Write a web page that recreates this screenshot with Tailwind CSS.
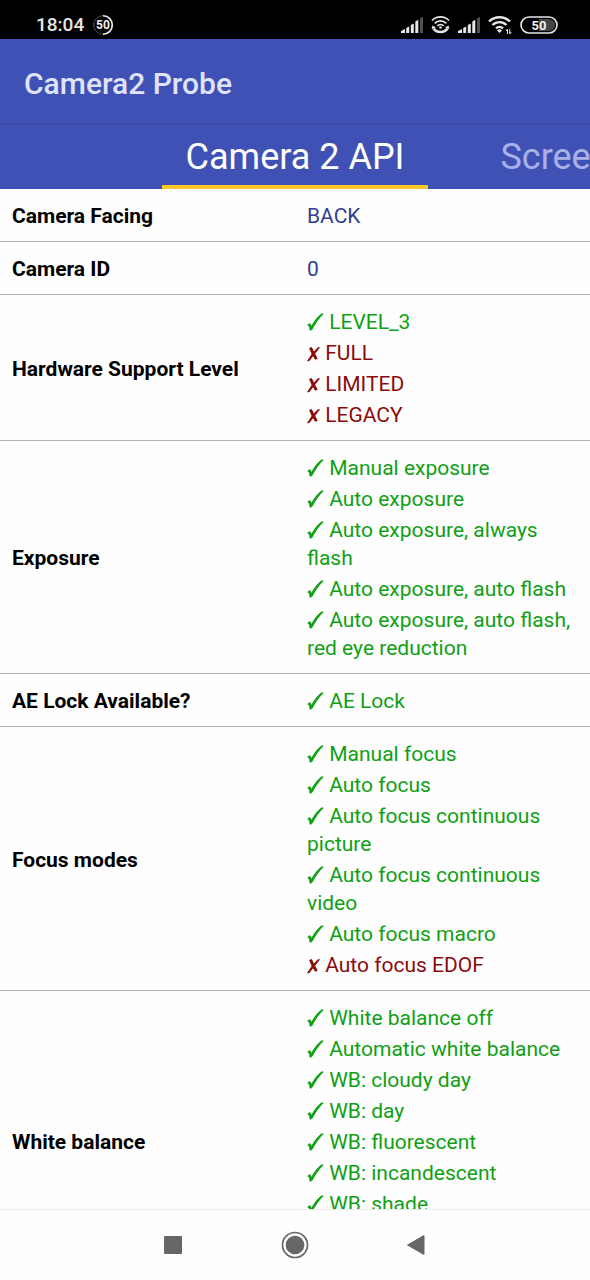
<!DOCTYPE html>
<html lang="en">
<head>
  <meta charset="UTF-8" />
  <meta name="viewport" content="width=device-width, initial-scale=1.0"/>
  <title>Camera2 Probe</title>
  <script src="https://cdn.jsdelivr.net/npm/@tailwindcss/browser@4"></script>
</head>
<body class="h-screen flex flex-col bg-[#fefefe] font-[Roboto,'DejaVu_Sans',sans-serif] overflow-hidden">

  <!-- yes / no marks used in the table -->
  <svg class="hidden">
    <symbol id="yes" viewBox="0 0 17 18">
      <path d="M.8 12.300C1.400 11 2.500 10.500 3.200 10.900 3.900 11.300 4 12.400 4.300 14 7 8.500 10.500 4 14.400 1L16.200.9C12 5 8 10.500 5 16.400L3.100 17.300C2.700 15 2.400 12.900 1.700 12.500z" fill="currentColor" stroke="currentColor" stroke-width=".9" stroke-linejoin="round"/>
    </symbol>
    <symbol id="no" viewBox="0 0 13 18">
      <path d="M2.600 4.200L4.600 3.600 6.800 8.200 10.600 3.900 12.400 3.600 7.700 9.800 10.200 14.600 8.200 15.200 6.100 11.500 2.400 16.500.6 17 5.100 10z" fill="currentColor" stroke="currentColor" stroke-width=".9" stroke-linejoin="round"/>
    </symbol>
  </svg>

  <!-- status bar -->
  <div class="h-[39px] shrink-0 bg-black text-[#e6e6e6] flex items-center justify-between pl-9 pr-8 pt-2.5">
    <div class="flex items-center gap-2">
      <span class="text-[19px] leading-6 font-medium">18:04</span>
      <svg width="22" height="22" viewBox="0 0 22 22" fill="none" role="img">
        <circle cx="11" cy="11" r="9.3" stroke="#555" stroke-width="1"/>
        <path d="M11 1.700a9.300 9.300 0 0 1 0 18.600" stroke="#eee" stroke-width="1.600"/>
        <text x="11" y="15" text-anchor="middle" font-family="Roboto" font-size="12" font-weight="700" fill="#eee">50</text>
      </svg>
    </div>
    <div class="flex items-center gap-2">
      <svg width="22" height="18" viewBox="0 0 22 18" fill="#e6e6e6">
        <path d="M0 17v-2l4-2v4zM5.200 17v-5l3-1.500v6.500zM9.800 17v-8l3-1.500v9.500zM14.300 17v-11.500l3-1.800v13.300z"/>
        <path d="M19 17v-14.500l3-1.800v16.300z" fill="#505050"/>
      </svg>
      <svg width="19" height="19" viewBox="0 0 19 19" fill="none" stroke="#e6e6e6" stroke-width="1.700">
        <path d="M1 5.500a12 12 0 0 1 17 0M3.700 8.300a8.200 8.200 0 0 1 11.600 0M6.300 10.900a4.600 4.600 0 0 1 6.400 0"/>
        <circle cx="9.500" cy="12.500" r="1.300" fill="#e6e6e6" stroke="none"/>
        <path d="M2.500 13.500c3 4.700 11 4.700 14 0" stroke-width="2.600"/>
        <path d="M.5 14l1-3.500 3.500 2zM18.500 14l-1-3.500-3.500 2z" fill="#e6e6e6" stroke="none"/>
      </svg>
      <svg width="22" height="18" viewBox="0 0 22 18" fill="#e6e6e6">
        <path d="M0 17v-2l4-2v4zM5.200 17v-5l3-1.500v6.500zM9.800 17v-8l3-1.500v9.500zM14.300 17v-11.500l3-1.800v13.300z"/>
        <path d="M19 17v-14.500l3-1.800v16.300z" fill="#505050"/>
      </svg>
      <svg width="24" height="19" viewBox="0 0 24 19" fill="none" stroke="#e6e6e6" stroke-width="2.400">
        <path d="M1 6.500a15 15 0 0 1 21 0M4.500 10a10 10 0 0 1 14 0M8 13.400a5.200 5.200 0 0 1 7 0"/>
        <path d="M11.500 18l-2.500-2.500a3.500 3.500 0 0 1 5 0z" fill="#e6e6e6" stroke="none"/>
        <path d="M19.500 19v-5l-1.500 2M21.800 14v5l1.500-2" stroke-width="1"/>
      </svg>
      <svg width="38" height="18" viewBox="0 0 38 18" role="img">
        <path d="M19 3h10a6 6 0 0 1 0 12H19z" fill="#444"/>
        <rect x="1" y="1" width="36" height="16" rx="8" fill="none" stroke="#e6e6e6" stroke-width="1.600"/>
        <text x="19" y="13.500" text-anchor="middle" font-family="Roboto" font-size="13" font-weight="700" fill="#eee">50</text>
      </svg>
    </div>
  </div>

  <header class="shrink-0 bg-[#3f51b5]">
    <h1 class="h-[86px] px-6 pt-6 text-[30px] leading-[42px] font-medium text-[#dfe3fa] border-b-2 border-[#3b4cac]">Camera2 Probe</h1>
    <nav class="grid grid-cols-[1fr_auto_1fr] text-[36px] leading-[56px]">
      <a href="#" class="col-start-2 px-6 pt-1 text-white border-b-4 border-[#f9c728]">Camera 2 API</a>
      <a href="#" class="pl-[72px] pt-1 text-[#a9b2e6] whitespace-nowrap overflow-hidden">Screen</a>
    </nav>
  </header>

  <main class="flex-1 overflow-hidden">
    <table class="w-full table-fixed border-collapse text-[21px] leading-7 text-left">
      <tbody class="[&_th]:px-3 [&_td]:px-3 [&_th]:pt-[13px] [&_td]:pt-2.5 [&_th]:pb-[11px] [&_td]:pb-[11px] [&_p]:pt-[3px] [&_tr]:border-b [&_tr]:border-[#b0b0b0] [&_svg]:inline [&_svg]:h-[18px] [&_svg]:align-[-2px]">
        <tr>
          <th scope="row">Camera Facing</th>
          <td class="text-[#303f8f]"><p>BACK</p></td>
        </tr>
        <tr>
          <th scope="row">Camera ID</th>
          <td class="text-[#303f8f]"><p>0</p></td>
        </tr>
        <tr>
          <th scope="row">Hardware Support Level</th>
          <td class="text-[#8b0a0a]">
            <p class="text-[#0fa014]"><svg class="w-[17px]" role="img" aria-label="yes"><use href="#yes"/></svg> LEVEL_3</p>
            <p><svg class="w-[13px]" role="img" aria-label="no"><use href="#no"/></svg> FULL</p>
            <p><svg class="w-[13px]" role="img" aria-label="no"><use href="#no"/></svg> LIMITED</p>
            <p><svg class="w-[13px]" role="img" aria-label="no"><use href="#no"/></svg> LEGACY</p>
          </td>
        </tr>
        <tr>
          <th scope="row">Exposure</th>
          <td class="text-[#0fa014]">
            <p><svg class="w-[17px]" role="img" aria-label="yes"><use href="#yes"/></svg> Manual exposure</p>
            <p><svg class="w-[17px]" role="img" aria-label="yes"><use href="#yes"/></svg> Auto exposure</p>
            <p><svg class="w-[17px]" role="img" aria-label="yes"><use href="#yes"/></svg> Auto exposure, always flash</p>
            <p><svg class="w-[17px]" role="img" aria-label="yes"><use href="#yes"/></svg> Auto exposure, auto flash</p>
            <p><svg class="w-[17px]" role="img" aria-label="yes"><use href="#yes"/></svg> Auto exposure, auto flash, red eye reduction</p>
          </td>
        </tr>
        <tr>
          <th scope="row">AE Lock Available?</th>
          <td class="text-[#0fa014]">
            <p><svg class="w-[17px]" role="img" aria-label="yes"><use href="#yes"/></svg> AE Lock</p>
          </td>
        </tr>
        <tr>
          <th scope="row">Focus modes</th>
          <td class="text-[#0fa014]">
            <p><svg class="w-[17px]" role="img" aria-label="yes"><use href="#yes"/></svg> Manual focus</p>
            <p><svg class="w-[17px]" role="img" aria-label="yes"><use href="#yes"/></svg> Auto focus</p>
            <p><svg class="w-[17px]" role="img" aria-label="yes"><use href="#yes"/></svg> Auto focus continuous picture</p>
            <p><svg class="w-[17px]" role="img" aria-label="yes"><use href="#yes"/></svg> Auto focus continuous video</p>
            <p><svg class="w-[17px]" role="img" aria-label="yes"><use href="#yes"/></svg> Auto focus macro</p>
            <p class="text-[#8b0a0a]"><svg class="w-[13px]" role="img" aria-label="no"><use href="#no"/></svg> Auto focus EDOF</p>
          </td>
        </tr>
        <tr>
          <th scope="row">White balance</th>
          <td class="text-[#0fa014]">
            <p><svg class="w-[17px]" role="img" aria-label="yes"><use href="#yes"/></svg> White balance off</p>
            <p><svg class="w-[17px]" role="img" aria-label="yes"><use href="#yes"/></svg> Automatic white balance</p>
            <p><svg class="w-[17px]" role="img" aria-label="yes"><use href="#yes"/></svg> WB: cloudy day</p>
            <p><svg class="w-[17px]" role="img" aria-label="yes"><use href="#yes"/></svg> WB: day</p>
            <p><svg class="w-[17px]" role="img" aria-label="yes"><use href="#yes"/></svg> WB: fluorescent</p>
            <p><svg class="w-[17px]" role="img" aria-label="yes"><use href="#yes"/></svg> WB: incandescent</p>
            <p><svg class="w-[17px]" role="img" aria-label="yes"><use href="#yes"/></svg> WB: shade</p>
            <p><svg class="w-[17px]" role="img" aria-label="yes"><use href="#yes"/></svg> WB: twilight</p>
            <p><svg class="w-[17px]" role="img" aria-label="yes"><use href="#yes"/></svg> WB: warm fluorescent</p>
          </td>
        </tr>
      </tbody>
    </table>
  </main>

  <!-- system navigation -->
  <div class="h-[71px] shrink-0 border-t border-[#ececec] bg-[#fefefe] flex items-center justify-center gap-[94px]">
    <button type="button" aria-label="Recent apps">
      <svg width="28" height="28" viewBox="0 0 28 28"><rect x="5" y="5" width="18" height="18" rx="1" fill="#666"/></svg>
    </button>
    <button type="button" aria-label="Home">
      <svg width="28" height="28" viewBox="0 0 28 28">
        <circle cx="14" cy="14" r="12.500" fill="none" stroke="#666" stroke-width="1.700"/>
        <circle cx="14" cy="14" r="9.300" fill="#666"/>
      </svg>
    </button>
    <button type="button" aria-label="Back">
      <svg width="28" height="28" viewBox="0 0 28 28"><path d="M4.500 14L21 4.500v19z" fill="#666" stroke="#666" stroke-linejoin="round"/></svg>
    </button>
  </div>
</body>
</html>
